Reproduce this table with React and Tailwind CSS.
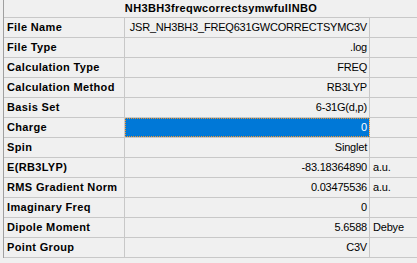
import React from 'react';

// summary grid of a Gaussian job: property / value / unit
const rows = [
  { label: 'File Name', value: 'JSR_NH3BH3_FREQ631GWCORRECTSYMC3V', unit: '' },
  { label: 'File Type', value: '.log', unit: '' },
  { label: 'Calculation Type', value: 'FREQ', unit: '' },
  { label: 'Calculation Method', value: 'RB3LYP', unit: '' },
  { label: 'Basis Set', value: '6-31G(d,p)', unit: '' },
  { label: 'Charge', value: '0', unit: '', selected: true },
  { label: 'Spin', value: 'Singlet', unit: '' },
  { label: 'E(RB3LYP)', value: '-83.18364890', unit: 'a.u.' },
  { label: 'RMS Gradient Norm', value: '0.03475536', unit: 'a.u.' },
  { label: 'Imaginary Freq', value: '0', unit: '' },
  { label: 'Dipole Moment', value: '5.6588', unit: 'Debye' },
  { label: 'Point Group', value: 'C3V', unit: '' },
];

function Row({ label, value, unit, selected }) {
  return (
    <div className="flex h-[20px] border-b border-[#c8c8c8]">
      <div className="w-[121px] shrink-0 border-r border-[#c8c8c8] pl-[3px] font-bold tracking-[0.35px] leading-[19px] whitespace-nowrap overflow-hidden">
        {label}
      </div>
      <div
        className={
          selected
            ? 'w-[245px] shrink-0 border-r border-[#c8c8c8] pr-[2px] text-right leading-[19px] whitespace-nowrap overflow-hidden tracking-[-0.2px] bg-[#0078d7] text-white outline-1 outline-dotted outline-[#f0932b] -outline-offset-1'
            : 'w-[245px] shrink-0 border-r border-[#c8c8c8] pr-[2px] text-right leading-[19px] whitespace-nowrap overflow-hidden tracking-[-0.2px]'
        }
      >
        {value}
      </div>
      <div className="flex-1 pl-[3px] leading-[19px] whitespace-nowrap tracking-[-0.2px]">{unit}</div>
    </div>
  );
}

export default function App() {
  return (
    <div
      className="w-[417px] h-[263px] overflow-hidden bg-[#f0f0f0] pl-[3px] text-[11px] text-black"
      style={{ fontFamily: '"Liberation Sans", Arial, sans-serif' }}
    >
      <div className="w-[435px] border-l border-[#a0a0a0]">
        <div className="h-[18px] border-b border-[#c8c8c8] flex justify-center font-bold tracking-[0.35px] leading-[17px]">
          NH3BH3freqwcorrectsymwfullNBO
        </div>
        {rows.map((r) => (
          <Row key={r.label} {...r} />
        ))}
      </div>
    </div>
  );
}
